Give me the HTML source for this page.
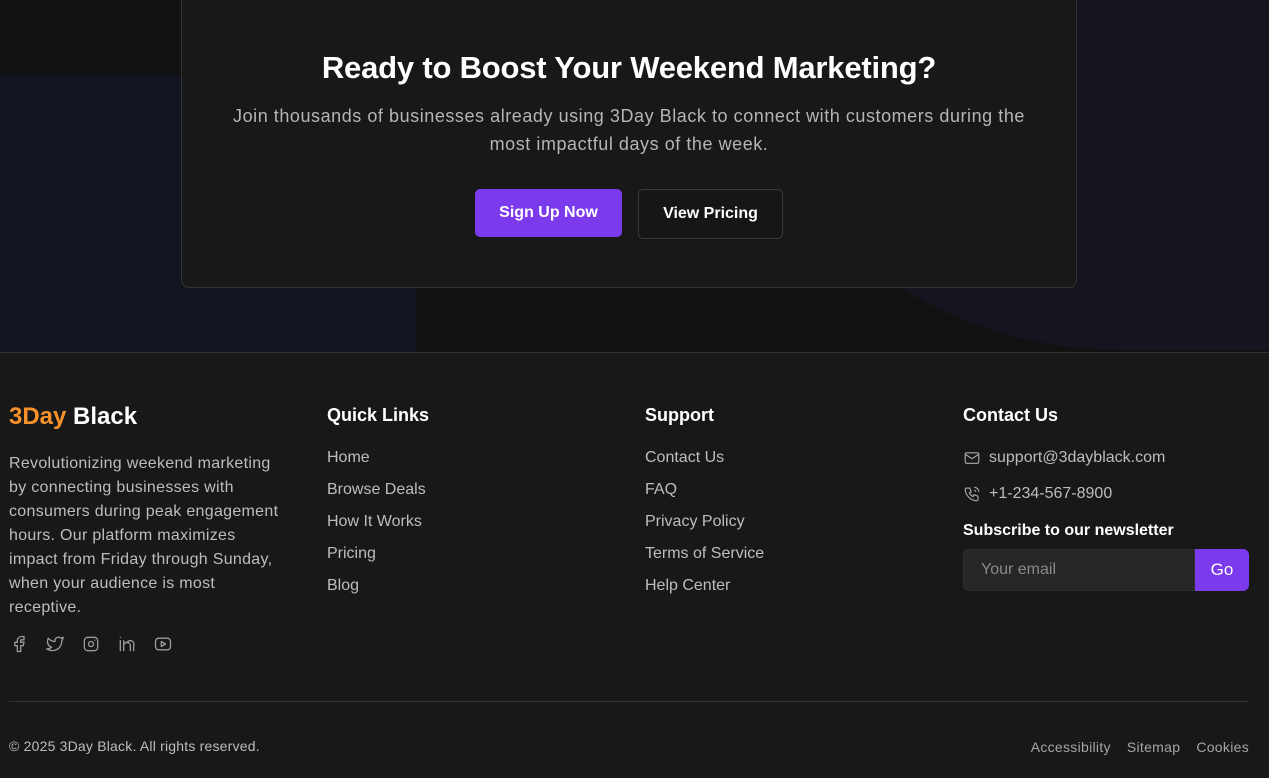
<!DOCTYPE html>
<html><head><meta charset="utf-8"><style>
*{box-sizing:border-box;margin:0;padding:0}
html,body{width:1269px;height:778px;overflow:hidden;background:#181818;font-family:"Liberation Sans",sans-serif}
.top{position:absolute;left:0;top:0;width:1269px;height:352px;background:#111;overflow:hidden}
.b1{position:absolute;left:-20px;top:75px;width:437px;height:320px;background:#12151f;border-top-right-radius:60px}
.b2{position:absolute;left:700px;top:-300px;width:900px;height:650px;background:#16141f;border-radius:0 0 0 420px}
.card{position:absolute;left:181px;top:0;width:896px;height:288px;background:#181818;border:1px solid #333;border-top:none;border-radius:0 0 8px 8px;text-align:center}
h1{color:#fff;font-size:31px;font-weight:bold;margin-top:50px;letter-spacing:-0.2px}
.card p{color:#b5b5b5;font-size:18px;line-height:28px;margin:16px auto 0;width:880px;letter-spacing:0.55px}
.btns{margin-top:31px;display:flex;justify-content:center;gap:16px}
.bt{height:49px;border-radius:5px;font-size:16px;font-weight:bold;color:#fff;display:flex;align-items:center;justify-content:center}
.p{background:#7c3aed;width:147px;height:48px}
.o{border:1px solid #3a3a3a;width:145px;background:#161616;height:50px}
.foot{position:absolute;left:0;top:352px;width:1269px;height:426px;border-top:1px solid #333}
.col{position:absolute;top:52px}
h3{color:#fff;font-size:18px;font-weight:bold}
.lk a{display:block;color:#bdbdbd;font-size:16px;text-decoration:none;height:32px;line-height:32px}
.desc{color:#bdbdbd;font-size:16px;line-height:24px;width:300px;margin-top:21px;letter-spacing:0.3px;white-space:nowrap}
.soc{display:flex;gap:16px;margin-top:14px}
.soc svg{flex:none;width:20px;height:20px;stroke:#9a9a9a;fill:none;stroke-width:1.6;stroke-linecap:round;stroke-linejoin:round}
.ci{display:flex;align-items:center;color:#bdbdbd;font-size:16px;height:36px}
.ci svg{flex:none;width:18px;height:18px;stroke:#aaa;fill:none;stroke-width:1.5;margin-right:8px}
.nl{display:flex;margin-top:9px;width:286px;height:42px}
.in{flex:1;background:#262626;border:1px solid #2e2e2e;border-radius:6px 0 0 6px;color:#8a8a8a;font-size:16px;padding-left:17px;line-height:40px}
.go{width:54px;background:#7c3aed;color:#fff;font-size:17px;border-radius:0 6px 6px 0;text-align:center;line-height:42px}
.hr{position:absolute;left:9px;top:348px;width:1240px;height:1px;background:#333}
.cp{position:absolute;left:9px;top:385px;color:#bdbdbd;font-size:14px;letter-spacing:0.2px}
.bl{position:absolute;right:20px;top:386px;display:flex;gap:16px;color:#a5a5a5;font-size:14px;letter-spacing:0.3px}
</style></head><body>
<div class="top"><div class="b1"></div><div class="b2"></div>
<div class="card"><h1>Ready to Boost Your Weekend Marketing?</h1>
<p>Join thousands of businesses already using 3Day Black to connect with customers during the<br>most impactful days of the week.</p>
<div class="btns"><div class="bt p">Sign Up Now</div><div class="bt o">View Pricing</div></div></div></div>
<div class="foot">
<div class="col" style="left:9px;top:50px"><div style="font-size:24px;font-weight:bold;color:#fff"><span style="color:#f7922b">3Day</span> Black</div>
<div class="desc">Revolutionizing weekend marketing<br>by connecting businesses with<br>consumers during peak engagement<br>hours. Our platform maximizes<br>impact from Friday through Sunday,<br>when your audience is most<br>receptive.</div>
<div class="soc">
<svg viewBox="0 0 24 24"><path d="M7 10v4h3v7h4v-7h3l1-4h-4V8a1 1 0 0 1 1-1h3V3h-3a5 5 0 0 0-5 5v2H7z"/></svg>
<svg viewBox="0 0 24 24"><path d="M22 4.01c-1 .49-1.98.689-3 .99-1.121-1.265-2.783-1.335-4.38-.737S11.977 6.323 12 8v1c-3.245.083-6.135-1.395-8-4 0 0-4.182 7.433 4 11-1.872 1.247-3.739 2.088-6 2 3.308 1.803 6.913 2.423 10.034 1.517 3.58-1.04 6.522-3.723 7.651-7.742a13.84 13.84 0 0 0 .497-3.753C20.18 7.773 21.692 5.25 22 4.009z"/></svg>
<svg viewBox="0 0 24 24"><rect x="4" y="4" width="16" height="16" rx="4"/><circle cx="12" cy="12" r="3"/><path d="M16.5 7.5v.01"/></svg>
<svg viewBox="0 0 24 24"><path d="M4 4v.01M4 8v12M8 8v12M8 14a4 4 0 0 1 8 0v6"/><path d="M12 10.5a4 4 0 0 1 8 3.5v6"/></svg>
<svg viewBox="0 0 24 24"><rect x="3" y="5" width="18" height="14" rx="4"/><path d="M10 9l5 3-5 3z"/></svg>
</div></div>
<div class="col" style="left:327px"><h3>Quick Links</h3><div class="lk" style="margin-top:16px"><a>Home</a><a>Browse Deals</a><a>How It Works</a><a>Pricing</a><a>Blog</a></div></div>
<div class="col" style="left:645px"><h3>Support</h3><div class="lk" style="margin-top:16px"><a>Contact Us</a><a>FAQ</a><a>Privacy Policy</a><a>Terms of Service</a><a>Help Center</a></div></div>
<div class="col" style="left:963px"><h3>Contact Us</h3>
<div style="margin-top:14px">
<div class="ci"><svg viewBox="0 0 24 24"><rect x="3" y="5" width="18" height="14" rx="2"/><path d="M3 7l9 6 9-6"/></svg>support@3dayblack.com</div>
<div class="ci"><svg viewBox="0 0 24 24"><path d="M5 4h4l2 5-2.5 1.5a11 11 0 0 0 5 5L15 13l5 2v4a2 2 0 0 1-2 2A16 16 0 0 1 3 6a2 2 0 0 1 2-2M15 7a2 2 0 0 1 2 2M15 3a6 6 0 0 1 6 6"/></svg>+1-234-567-8900</div>
</div>
<div style="color:#fff;font-size:16px;font-weight:bold;margin-top:10px">Subscribe to our newsletter</div>
<div class="nl"><div class="in">Your email</div><div class="go">Go</div></div>
</div>
<div class="hr"></div>
<div class="cp">© 2025 3Day Black. All rights reserved.</div>
<div class="bl"><span>Accessibility</span><span>Sitemap</span><span>Cookies</span></div>
</div>
</body></html>
